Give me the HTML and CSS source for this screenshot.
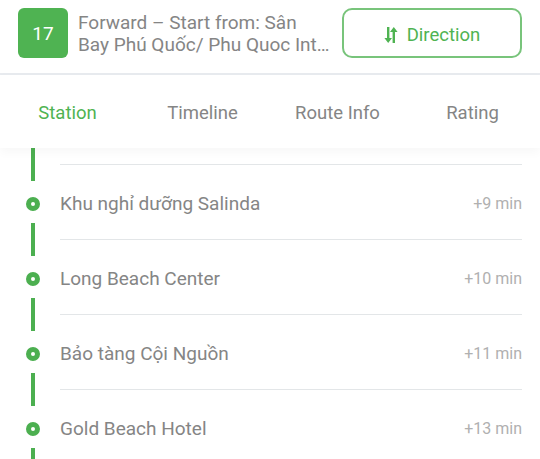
FILE: index.html
```html
<!DOCTYPE html>
<html lang="en">
<head>
    <meta charset="UTF-8">
    <meta name="viewport" content="width=device-width, initial-scale=1.0">
    <title>Route 17</title>
    <link rel="stylesheet" href="styles.css">
</head>
<body>
    <div class="header">
        <div class="badge">17</div>
        <div class="title">
            <span class="line">Forward – Start from: Sân</span>
            <span class="line">Bay Phú Quốc/ Phu Quoc Int…</span>
        </div>
        <button class="direction">
            <svg class="swap" viewBox="0 0 14 16" width="14" height="16">
                <path d="M3 0h2.4v11h2.6L4.2 16 0.4 11h2.6z" fill="currentColor"/>
                <path d="M9.6 16h-2.4V5H4.6L8.4 0l3.8 5H9.6z" transform="translate(1.4 0)" fill="currentColor"/>
            </svg>
            Direction
        </button>
    </div>

    <div class="tabs">
        <div class="tab active">Station</div>
        <div class="tab">Timeline</div>
        <div class="tab">Route Info</div>
        <div class="tab">Rating</div>
    </div>

    <div class="list">
        <!-- end of the previous stop's rail, scrolled past -->
        <div class="tail"><span class="seg"></span></div>
        <div class="station">
            <div class="rail"><span class="seg top"></span><span class="dot"></span><span class="seg bottom"></span></div>
            <div class="info"><span class="name">Khu nghỉ dưỡng Salinda</span><span class="time">+9 min</span></div>
        </div>
        <div class="station">
            <div class="rail"><span class="seg top"></span><span class="dot"></span><span class="seg bottom"></span></div>
            <div class="info"><span class="name">Long Beach Center</span><span class="time">+10 min</span></div>
        </div>
        <div class="station">
            <div class="rail"><span class="seg top"></span><span class="dot"></span><span class="seg bottom"></span></div>
            <div class="info"><span class="name">Bảo tàng Cội Nguồn</span><span class="time">+11 min</span></div>
        </div>
        <div class="station">
            <div class="rail"><span class="seg top"></span><span class="dot"></span><span class="seg bottom"></span></div>
            <div class="info"><span class="name">Gold Beach Hotel</span><span class="time">+13 min</span></div>
        </div>
    </div>
</body>
</html>
```

FILE: styles.css
```css
body {
    font-family: Roboto, "Noto Sans", sans-serif;
    background-color: #fff;
    margin: 0;
    height: 459px;
    overflow: hidden;
}
.header {
    display: flex;
    align-items: center;
    padding: 8px 18px 15px 18px;
    border-bottom: 2px solid #e8ebef;
}
.badge {
    width: 50px;
    height: 50px;
    flex-shrink: 0;
    border-radius: 6px;
    background-color: #4fb352;
    color: #fff;
    font-size: 19px;
    display: flex;
    align-items: center;
    justify-content: center;
}
.title {
    flex: 1;
    margin: 2px 12px 0 10px;
    font-size: 19px;
    line-height: 22px;
    color: #858585;
    display: flex;
    flex-direction: column;
    overflow: hidden;
}
.title .line {
    white-space: nowrap;
}
.direction {
    width: 180px;
    height: 50px;
    flex-shrink: 0;
    border: 2px solid #78c47b;
    border-radius: 10px;
    background-color: #fff;
    color: #4fb352;
    font-family: inherit;
    font-size: 18.5px;
    display: flex;
    align-items: center;
    justify-content: center;
    gap: 9px;
    padding: 3px 0 0 0;
}
.tabs {
    display: flex;
    height: 73px;
    align-items: center;
    position: relative;
    z-index: 1;
    background-color: #fff;
    box-shadow: 0 4px 10px rgba(0, 0, 0, 0.035);
}
.tab {
    flex: 1;
    text-align: center;
    font-size: 18.5px;
    color: #858585;
    padding-top: 2px;
}
.tab.active {
    color: #4fb352;
}
.list {
    overflow: hidden;
}
.tail {
    width: 60px;
    height: 16px;
    display: flex;
    justify-content: center;
    padding-left: 6px;
    box-sizing: border-box;
}
.station {
    display: flex;
    height: 75px;
}
.rail {
    width: 60px;
    display: flex;
    flex-direction: column;
    align-items: center;
    padding-left: 6px;
    box-sizing: border-box;
}
.seg {
    width: 4px;
    background-color: #4caf50;
}
.seg.top {
    height: 17px;
    margin-bottom: 16px;
}
.seg.bottom {
    height: 16px;
    margin-top: 12px;
}
.dot {
    width: 4px;
    height: 4px;
    border: 5px solid #4caf50;
    border-radius: 50%;
    background-color: #fff;
}
.info {
    flex: 1;
    margin-right: 18px;
    border-top: 1px solid #e3e6e8;
    display: flex;
    align-items: center;
    justify-content: space-between;
    padding-top: 2px;
}
.name {
    font-size: 19px;
    color: #858585;
}
.time {
    font-size: 16px;
    color: #b0b0b0;
}
```
